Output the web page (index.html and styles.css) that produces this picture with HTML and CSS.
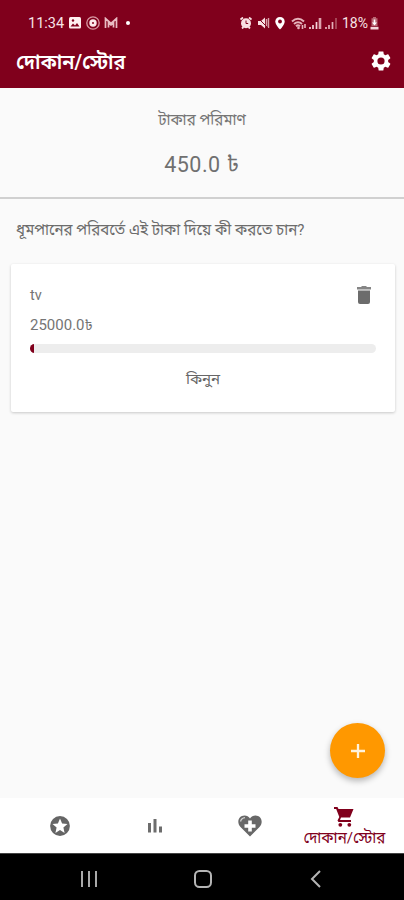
FILE: index.html
```
<!DOCTYPE html>
<html lang="bn">
<head>
<meta charset="utf-8">
<title>দোকান/স্টোর</title>
<link rel="stylesheet" href="styles.css">
</head>
<body>
<div class="screen">
  <header class="top">
    <div class="status">
      <span class="clock">11:34</span>
      <svg class="s-img" width="12" height="12" viewBox="0 0 12 12"><rect width="12" height="11.5" rx="1.5" fill="#fff0f0"/><path d="M1.5 9.5 4 6.5l2 2 2-2.500 2.500 3.500z" fill="#80001c"/><circle cx="4" cy="3.500" r="1.200" fill="#80001c"/></svg>
      <svg class="s-rec" width="14" height="14" viewBox="0 0 14 14"><circle cx="7" cy="7" r="6.200" fill="none" stroke="#d99aa5" stroke-width="1.300"/><circle cx="7" cy="7" r="3.700" fill="#fbe8ea"/><circle cx="7" cy="7" r="1" fill="#80001c"/></svg>
      <svg class="s-m" width="14" height="12" viewBox="0 0 14 12"><path d="M1.500 11V1.500L7 6.500l5.500-5V11M4.500 10.500V6L7 8l2.500-2v4.500" fill="none" stroke="#e9bcc3" stroke-width="1.700"/></svg>
      <span class="dot"></span>
      <span class="grow"></span>
      <svg class="s-alarm" width="12" height="12" viewBox="0 0 12 12"><path d="M.5 2.500 3 .5M11.500 2.500 9 .5M2 11.500 3.500 10M10 11.500 8.500 10" stroke="#f8dfe2" stroke-width="1.800"/><circle cx="6" cy="6.200" r="5" fill="#f8dfe2"/><path d="M6 3.500v3h2.200" fill="none" stroke="#80001c"/></svg>
      <svg class="s-mute" width="13" height="12" viewBox="0 0 13 12"><path d="M1 4h3l4-3.500v11L4 8H1z" fill="#f8dfe2"/><path d="M9.500 2v8M11.500 1v10" stroke="#d9a0a9" stroke-width="1.400"/><path d="M1 1l10 10" stroke="#80001c" stroke-width="1"/></svg>
      <svg class="s-pin" width="10" height="13" viewBox="0 0 10 13"><path d="M5 0C2.200 0 .3 2 .3 4.500.3 8 5 12.500 5 12.500S9.700 8 9.700 4.500C9.700 2 7.800 0 5 0z" fill="#fff"/><circle cx="5" cy="4.500" r="1.900" fill="#80001c"/></svg>
      <svg class="s-wifi" width="16" height="13" viewBox="0 0 16 13"><path d="M1 4.500Q7 -1 13 4.500M3 7Q7 3.500 11 7M5 9.300Q7 7.500 9 9.300" fill="none" stroke="#e5b3bb" stroke-width="2"/><circle cx="7.500" cy="11" r="1.300" fill="#e5b3bb"/><path d="M11.500 8v4M14 7v4" stroke="#e5b3bb" stroke-width="1.600"/></svg>
      <svg class="s-sig" width="13" height="12" viewBox="0 0 13 12"><path d="M1 10v2M4 8v4M7.500 5v7" stroke="#f3d5d9" stroke-width="1.700"/><path d="M11 1v11" stroke="#dda3ad" stroke-width="2.600"/></svg>
      <svg class="s-sig2" width="13" height="12" viewBox="0 0 13 12"><path d="M1 10v2M4 8v4M7.500 5v7" stroke="#e3b0b8" stroke-width="1.700"/><path d="M11 1v11" stroke="#a94d5d" stroke-width="1.800"/></svg>
      <span class="pct">18%</span>
      <svg class="s-bat" width="9" height="13" viewBox="0 0 9 13"><path d="M3 0h3v1.200h1.500V9h-6V1.200H3z" fill="#b96673"/><path d="M4.500 2.500v4" stroke="#fff" stroke-width="1.600"/><path d="M2 5.500h5l-2.500 3z" fill="#fff"/><path d="M.5 9.800h8v2.700h-8z" fill="#f3d5d9"/></svg>
    </div>
    <div class="appbar">
      <h1>দোকান/স্টোর</h1>
      <svg class="gear" width="24" height="24" viewBox="0 0 24 24"><path fill="#fff" d="M19.140 12.940c.040-.300.060-.610.060-.940 0-.320-.020-.640-.070-.940l2.030-1.580c.180-.140.230-.410.120-.610l-1.920-3.320c-.120-.220-.370-.290-.590-.220l-2.390.960c-.500-.380-1.030-.700-1.620-.940l-.360-2.540c-.040-.240-.240-.410-.480-.410h-3.840c-.240 0-.430.170-.470.410l-.360 2.540c-.590.240-1.130.570-1.620.940l-2.390-.960c-.220-.080-.470 0-.590.220L2.740 8.870c-.120.210-.080.470.120.610l2.030 1.580c-.050.300-.090.630-.090.940s.020.640.070.940l-2.030 1.580c-.180.140-.230.410-.120.610l1.920 3.320c.120.220.370.290.590.220l2.390-.960c.500.380 1.030.700 1.620.940l.360 2.540c.050.240.240.410.480.410h3.840c.240 0 .440-.170.470-.410l.360-2.540c.590-.240 1.130-.560 1.620-.940l2.390.960c.220.080.470 0 .590-.220l1.920-3.320c.120-.220.070-.470-.120-.610zM12 15.600A3.600 3.600 0 1 1 12 8.400a3.600 3.600 0 0 1 0 7.200z"/></svg>
    </div>
  </header>
  <section class="balance">
    <div class="label">টাকার পরিমাণ</div>
    <div class="amount">450.0 ৳</div>
  </section>
  <main>
    <p class="question">ধূমপানের পরিবর্তে এই টাকা দিয়ে কী করতে চান?</p>
    <article class="card">
      <div class="row">
        <span class="name">tv</span>
        <svg width="20" height="22" viewBox="0 0 20 22"><path fill="#858585" d="M3 3h4l1-1h4l1 1h4v2.500H3z"/><path fill="#6c6c6c" d="M4 6.500h12V18a2 2 0 0 1-2 2H6a2 2 0 0 1-2-2z"/></svg>
      </div>
      <div class="price">25000.0<span class="taka">৳</span></div>
      <div class="track"><div class="fill"></div></div>
      <div class="buy">কিনুন</div>
    </article>
    <div class="fab"><svg width="14" height="14" viewBox="0 0 14 14"><path d="M7 0v14M0 7h14" stroke="#fff3dc" stroke-width="2.300"/></svg></div>
  </main>
  <nav class="tabs">
    <div class="tab"><svg width="24" height="24" viewBox="0 0 24 24"><circle cx="12" cy="12" r="9.900" fill="#656565"/><path fill="#fff" d="m12 4.500 2.100 5 5.400.500-4.100 3.600 1.200 5.300-4.600-2.800-4.600 2.800 1.200-5.300L4.500 10l5.400-.5z"/></svg></div>
    <div class="tab"><svg width="18" height="18" viewBox="0 0 18 18"><path d="M3.500 6v9.500M9 2v13.500M14.500 9.500v6" stroke="#6d6d6d" stroke-width="3"/></svg></div>
    <div class="tab"><svg width="26" height="24" viewBox="0 0 26 24"><path fill="#686868" d="M13 22.500 3.500 13C-1 8 2 1.500 7.500 1.500c2.300 0 4.300 1.100 5.500 3 1.200-1.900 3.200-3 5.500-3C24 1.500 27 8 22.500 13z"/><path d="M13 6.500v11M7.500 12h11" stroke="#fff" stroke-width="3.600"/><path d="M3.500 7.500Q4.500 4 8 3.700" fill="none" stroke="#d2d2d2" stroke-width="1.300"/></svg></div>
    <div class="tab active"><svg width="22" height="22" viewBox="0 0 22 22"><path fill="#80001c" d="M1 1h3.500l1 2H20.500L17 11.500H8L7 14h11v2H5.500L4.500 14.500 6.300 11 3.200 3H1z"/><circle cx="7.300" cy="18.800" r="1.900" fill="#80001c"/><circle cx="16.300" cy="18.800" r="1.900" fill="#80001c"/></svg><span>দোকান/স্টোর</span></div>
  </nav>
  <footer class="system">
    <svg width="18" height="18" viewBox="0 0 18 18"><path d="M2 1v16M9 1v16M16 1v16" stroke="#a9a9a9" stroke-width="2"/></svg>
    <svg width="18" height="18" viewBox="0 0 18 18"><rect x="1" y="1" width="16" height="16" rx="4.500" fill="none" stroke="#b5b5b5" stroke-width="2"/></svg>
    <svg width="18" height="18" viewBox="0 0 18 18"><path d="M13 1 5 9l8 8" fill="none" stroke="#b5b5b5" stroke-width="2"/></svg>
  </footer>
</div>
</body>
</html>
```
FILE: styles.css
```
* { box-sizing: border-box; }
body { margin: 0; font-family: Roboto, "Noto Sans Bengali", "Noto Sans", sans-serif; color: #757575; background: #fafafa; }
svg { display: block; flex: none; }
.screen { width: 404px; height: 900px; display: flex; flex-direction: column; overflow: hidden; }
.top { height: 88px; flex: none; background: #80001c; color: #fff; }
.status { height: 46px; padding: 0 25px 0 28px; display: flex; align-items: center; }
.clock { font-size: 14.5px; width: 36px; color: #f8e4e6; margin-right: 5px; }
.s-rec { margin-left: 5px; }
.s-m { margin-left: 4px; }
.dot { width: 4px; height: 4px; border-radius: 50%; background: #fff; margin-left: 8px; }
.grow { flex: 1; }
.s-mute { margin-left: 5px; }
.s-pin { margin-left: 5px; }
.s-wifi { margin-left: 6px; }
.s-sig { margin-left: 2px; }
.s-sig2 { margin-left: 3px; }
.pct { font-size: 14px; width: 27px; color: #f8e4e6; margin-left: 4px; white-space: nowrap; }
.s-bat { margin-left: 1px; }
.appbar { height: 30px; padding: 0 11px 0 16px; display: flex; align-items: center; justify-content: space-between; }
h1 { margin: 0; padding-top: 1px; font-size: 20px; line-height: 30px; font-weight: 600; white-space: nowrap; }
.balance { height: 111px; flex: none; border-bottom: 2px solid #d0d0d0; text-align: center; padding-top: 21px; }
.label { font-size: 15.1px; line-height: 22px; }
.amount { font-size: 21.5px; line-height: 28px; margin-top: 20px; letter-spacing: .5px; color: #707070; }
main { flex: 1; position: relative; padding: 20px 9px 0 11px; }
.question { margin: 0 0 23px 5px; font-size: 15.1px; line-height: 22px; height: 22px; white-space: nowrap; color: #6c6c6c; }
.card { height: 148px; background: #fff; border-radius: 2px; padding: 18px 19px 0; box-shadow: 0 1px 3px rgba(0,0,0,.2); display: flex; flex-direction: column; }
.row { height: 25px; display: flex; align-items: center; justify-content: space-between; margin-right: 2px; }
.name { font-size: 14.5px; padding-top: 1px; }
.price { font-size: 15px; line-height: 20px; margin-top: 8px; height: 20px; }
.taka { font-size: 14px; }
.track { height: 9px; margin-top: 9px; border-radius: 5px; background: #ededed; overflow: hidden; }
.fill { width: 4px; height: 9px; background: #80001c; }
.buy { margin-top: 15px; line-height: 22px; text-align: center; font-size: 15px; color: #666; }
.fab { position: absolute; right: 19px; bottom: 20px; width: 55px; height: 55px; border-radius: 50%; background: #ff9800; box-shadow: 0 3px 6px rgba(0,0,0,.28); display: flex; align-items: center; justify-content: center; }
.tabs { height: 55px; flex: none; background: #fff; display: grid; grid-template-columns: repeat(4, 94.7px); padding-left: 13px; }
.tab { display: flex; flex-direction: column; align-items: center; justify-content: center; }
.active { justify-content: flex-start; padding-top: 8px; color: #80001c; }
.active span { font-size: 15.2px; line-height: 20px; white-space: nowrap; }
.system { height: 47px; flex: none; background: #000; border-top: 1px solid #444; display: flex; justify-content: space-between; align-items: center; padding: 4px 79px 0 80px; }
```
